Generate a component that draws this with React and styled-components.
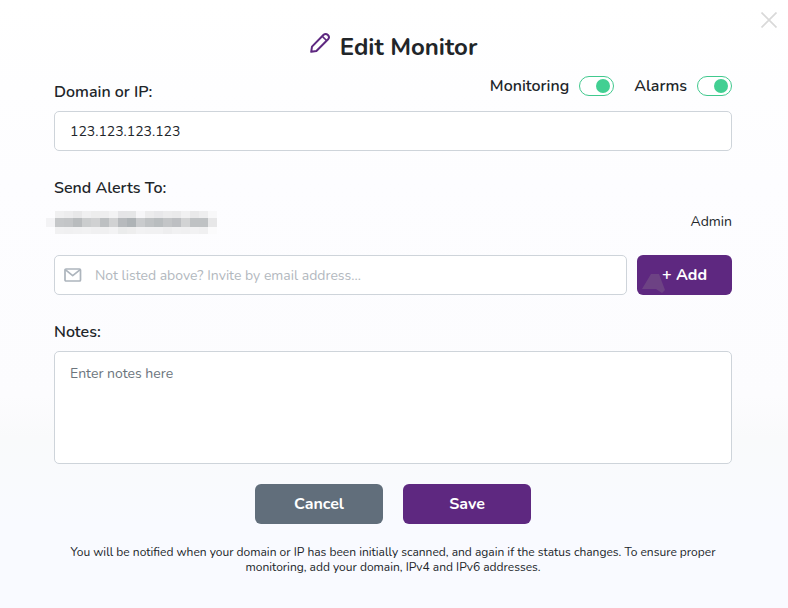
import React, { useState } from 'react';
import styled, { createGlobalStyle } from 'styled-components';

const GlobalStyle = createGlobalStyle`
  *, *::before, *::after {
    box-sizing: border-box;
  }

  body {
    margin: 0;
    color: #212529;
    background: #f9faff;
    font-family: Nunito, Lato, sans-serif;
    font-size: 14px;
  }

  button, input, textarea {
    font: inherit;
    color: inherit;
  }
`;

// Styled components
const Modal = styled.main`
  position: relative;
  min-height: 100vh;
  padding: 32px 56px 32px 54px;
  background: linear-gradient(180deg, #ffffff 0%, #fdfdff 30%, #fcfcfe 65%, #f9fafb 72%, #f9faff 86%);
`;

const CloseButton = styled.button`
  position: absolute;
  top: 12px;
  right: 11px;
  display: flex;
  padding: 0;
  border: 0;
  background: none;
  color: #d9d9d9;
  cursor: pointer;
`;

const Title = styled.h1`
  display: flex;
  justify-content: center;
  align-items: flex-start;
  gap: 9px;
  margin: 0;
  font-size: 24px;
  font-weight: 700;
  line-height: 30px;

  svg {
    color: #5e2880;
  }
`;

const FieldHeader = styled.div`
  display: flex;
  justify-content: space-between;
  align-items: flex-end;
  margin: 14px 0 9px;
`;

const Label = styled.label`
  display: block;
  font-size: 16px;
  font-weight: 600;
  line-height: 20px;
`;

const SectionLabel = styled(Label)`
  margin-bottom: 9px;
`;

const Switches = styled.div`
  display: flex;
  gap: 20px;
  padding-bottom: 6px;
`;

const SwitchLabel = styled(Label)`
  display: flex;
  align-items: center;
  gap: 10px;
`;

const Switch = styled.input`
  appearance: none;
  display: flex;
  align-items: center;
  width: 35px;
  height: 20px;
  margin: 0;
  padding: 0 3px;
  border: 1px solid #41c98e;
  border-radius: 10px;
  background: #ffffff;
  cursor: pointer;

  &::before {
    content: '';
    width: 14px;
    height: 14px;
    border-radius: 50%;
    background: #adb5bd;
  }

  &:checked::before {
    margin-left: auto;
    background: #42cf92;
  }
`;

const TextInput = styled.input`
  display: block;
  width: 100%;
  height: 40px;
  padding: 0 15px;
  border: 1px solid #ced4da;
  border-radius: 5px;
  background: #ffffff;
`;

const Section = styled.section`
  margin-top: 27px;
`;

const RecipientRow = styled.div`
  display: flex;
  justify-content: space-between;
  align-items: center;
  height: 28px;
  margin-bottom: 20px;
`;

const HiddenEmail = styled.svg`
  align-self: flex-end;
  margin-left: -8px;
`;

const InviteRow = styled.form`
  display: flex;
  gap: 10px;
`;

const InviteField = styled.label`
  display: flex;
  flex: 1;
  align-items: center;
  gap: 13px;
  height: 40px;
  padding: 0 9px;
  border: 1px solid #ced4da;
  border-radius: 5px;
  background: #ffffff;
  color: #adb5bd;
`;

const InviteInput = styled.input`
  flex: 1;
  min-width: 0;
  padding: 0;
  border: 0;
  outline: 0;
  background: none;
  color: #212529;

  &::placeholder {
    color: #b2b8be;
  }
`;

const Button = styled.button`
  width: ${({ $small }) => ($small ? 95 : 128)}px;
  height: 40px;
  padding: 0;
  border: 0;
  border-radius: 6px;
  background: ${({ $secondary }) => ($secondary ? '#616e7b' : '#5e2880')};
  color: #ffffff;
  font-size: 16px;
  font-weight: 700;
  cursor: pointer;
`;

const AddButton = styled(Button)`
  position: relative;
`;

const Smudge = styled.svg`
  position: absolute;
  left: 5px;
  bottom: 2px;
`;

const NotesArea = styled.textarea`
  display: block;
  width: 100%;
  height: 113px;
  padding: 12px 15px;
  border: 1px solid #ced4da;
  border-radius: 5px;
  background: #ffffff;
  line-height: 20px;
  resize: none;

  &::placeholder {
    color: #6c757d;
  }
`;

const Actions = styled.div`
  display: flex;
  justify-content: center;
  gap: 20px;
  margin-top: 20px;
`;

const FootNote = styled.p`
  margin: 21px 10px 0;
  font-size: 12px;
  line-height: 15px;
  text-align: center;
`;

const PencilIcon = () => (
  <svg width="22" height="22" viewBox="0 0 22 22" fill="none" stroke="currentColor" strokeWidth="2" strokeLinejoin="round" aria-hidden="true">
    <path d="M2.2 19.8 L3 14.6 L14.6 2.8 Q16.7 1 18.9 3 Q21 5.2 19.1 7.3 L7.4 19 Z" />
    <path d="M13.6 4.6 L17.4 8.4" strokeWidth="1.5" />
  </svg>
);

const MailIcon = () => (
  <svg width="18" height="14" viewBox="0 0 18 14" fill="none" stroke="currentColor" strokeWidth="1.7" strokeLinejoin="round" aria-hidden="true">
    <rect x="1" y="1" width="15.5" height="12" rx="1" />
    <path d="M1.3 1.6 L8.7 7.6 L16.2 1.6" />
  </svg>
);

const CloseIcon = () => (
  <svg width="16" height="16" viewBox="0 0 16 16" stroke="currentColor" strokeWidth="1.7" aria-hidden="true">
    <path d="M0.5 0.5 L15.5 15.5 M15.5 0.5 L0.5 15.5" />
  </svg>
);

// Shades of the blocks that cover the recipient's address, 9px each
const blocks = {
  top: ['#f0f0f1', '#ededee', '#e8e8e9', '#f0f0f1', '#ededed', '#eeeeef', '#f3f3f4', '#e5e5e7', '#e5e6e7', '#f6f6f8', '#ececed', '#e8e8ea', '#ececed', '#eaeaeb', '#f1f1f2', '#e9e9ea', '#eeeeef', '#f8f8f9'],
  middle: ['#c5c7c9', '#c3c5c7', '#b9bcbe', '#cbcdce', '#d0d1d2', '#bdc0c2', '#d1d2d3', '#b7babd', '#aeb3b6', '#c9cbcd', '#bfc2c4', '#b9bdbf', '#c3c5c7', '#bdbfc2', '#d2d3d4', '#bfc2c4', '#bfc2c4', '#e7e7e8'],
  bottom: ['#f1f1f2', '#f0f0f1', '#f1f1f2', '#f2f2f3', '#f0f0f1', '#f0f0f1', '#f3f3f4', '#ebecec', '#eeeeee', '#f2f2f3', '#f1f1f2', '#f1f1f2', '#eeeeef', '#f1f1f2', '#f0f0f1', '#f2f2f3', '#f0f0f1', '#fbfbfc'],
};

const Redacted = () => (
  <HiddenEmail width="180" height="24" role="img" aria-label="Hidden email address">
    <rect y="7" width="9" height="9" fill="#f3f3f5" />
    {blocks.top.map((fill, i) => <rect key={i} x={9 + i * 9} width="9" height="7" fill={fill} />)}
    {blocks.middle.map((fill, i) => <rect key={i} x={9 + i * 9} y="7" width="9" height="9" fill={fill} />)}
    {blocks.bottom.map((fill, i) => <rect key={i} x={9 + i * 9} y="16" width="9" height="7" fill={fill} />)}
  </HiddenEmail>
);

const App = () => {
  const [domain, setDomain] = useState('123.123.123.123');
  const [monitoring, setMonitoring] = useState(true);
  const [alarms, setAlarms] = useState(true);

  return (
    <>
      <GlobalStyle />
      <Modal>
        <CloseButton type="button" aria-label="Close">
          <CloseIcon />
        </CloseButton>
        <Title>
          <PencilIcon />
          Edit Monitor
        </Title>

        {/* Domain */}
        <FieldHeader>
          <Label htmlFor="domain">Domain or IP:</Label>
          <Switches>
            <SwitchLabel>
              Monitoring
              <Switch type="checkbox" checked={monitoring} onChange={(e) => setMonitoring(e.target.checked)} />
            </SwitchLabel>
            <SwitchLabel>
              Alarms
              <Switch type="checkbox" checked={alarms} onChange={(e) => setAlarms(e.target.checked)} />
            </SwitchLabel>
          </Switches>
        </FieldHeader>
        <TextInput id="domain" type="text" value={domain} onChange={(e) => setDomain(e.target.value)} />

        {/* Alert recipients */}
        <Section>
          <SectionLabel htmlFor="invite">Send Alerts To:</SectionLabel>
          <RecipientRow>
            <Redacted />
            <span>Admin</span>
          </RecipientRow>
          <InviteRow onSubmit={(e) => e.preventDefault()}>
            <InviteField>
              <MailIcon />
              <InviteInput id="invite" type="email" placeholder="Not listed above? Invite by email address..." />
            </InviteField>
            <AddButton type="submit" $small>
              <Smudge width="24" height="20" viewBox="0 0 24 20" aria-hidden="true">
                <path d="M0 16 L9 1 L17 1 L23 17 L20 20 L14 16 Z" fill="#6d4284" />
              </Smudge>
              + Add
            </AddButton>
          </InviteRow>
        </Section>

        {/* Notes */}
        <Section>
          <SectionLabel htmlFor="notes">Notes:</SectionLabel>
          <NotesArea id="notes" placeholder="Enter notes here" />
        </Section>

        <Actions>
          <Button type="button" $secondary>Cancel</Button>
          <Button type="button">Save</Button>
        </Actions>
        <FootNote>
          You will be notified when your domain or IP has been initially scanned, and again if the status changes. To ensure proper monitoring, add your domain, IPv4 and IPv6 addresses.
        </FootNote>
      </Modal>
    </>
  );
};

export default App;
